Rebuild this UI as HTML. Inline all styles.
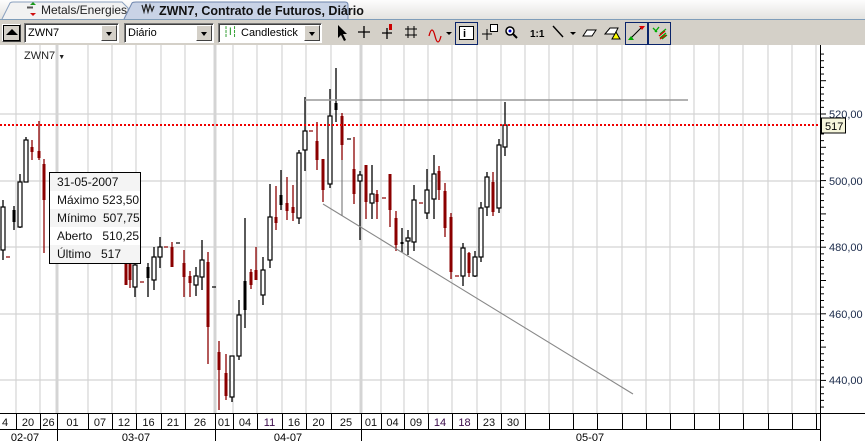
<!DOCTYPE html>
<html><head><meta charset="utf-8"><style>
*{margin:0;padding:0;box-sizing:border-box}
body{width:865px;height:441px;overflow:hidden;background:#fff;font-family:"Liberation Sans",sans-serif;font-size:11px;position:relative}
.tabs{position:absolute;left:0;top:0;width:865px;height:20px;background:linear-gradient(#fdfdfd,#e4e3e0);border-bottom:1px solid #7f9db9}
.tb{position:absolute;left:0;top:20px;width:865px;height:25px;background:#d4d0c8}
.combo{position:absolute;top:23px;height:20px;background:#fff;border:1px solid #7a7a7a;border-right-color:#fff;border-bottom-color:#fff;box-shadow:inset 1px 1px 0 #404040;font-size:11px;line-height:18px;padding-left:3px}
.dd{position:absolute;right:1px;top:1px;width:16px;height:16px;background:#d4d0c8;border:1px solid;border-color:#fff #404040 #404040 #fff}
.dd:after{content:"";position:absolute;left:4px;top:6px;border-left:3px solid transparent;border-right:3px solid transparent;border-top:4px solid #000}
.ic{position:absolute;top:22px;font-size:13px}
.box{position:absolute;top:22px;height:22px;border:1px solid #0a246a}
</style></head><body>
<div class="tabs">
 <svg width="865" height="20" style="position:absolute;left:0;top:0">
  <path d="M2 19 L10 3 Q11 2 13 2 L122 2 L128 8 L128 19" fill="#f2f2f2" stroke="#8aa0bf"/>
  <path d="M124 19 L132 3 Q133 2 136 2 L345 2 Q348 2 348 5 L348 19" fill="#c9d3e6" stroke="#6f86ae"/>
  <path d="M30 5 l3 -3 3 3z" fill="#1a9a1a"/><path d="M27 7 h6 M27 8 h6" stroke="#555"/><path d="M30 13 l3 3 3 -3z" fill="#d01010"/>
  <path d="M142 5 l2 7 2 -8 2 8 2 -7 2 6 2 -5" fill="none" stroke="#222" stroke-width="1.2"/>
  <text x="41" y="14" font-size="12" fill="#222" font-family="Liberation Sans">Metals/Energies</text>
  <text x="159" y="15" font-size="12.5" font-weight="bold" fill="#111" font-family="Liberation Sans">ZWN7, Contrato de Futuros, Diário</text>
 </svg>
</div>
<div class="tb"></div>
<div style="position:absolute;left:2px;top:24px;width:19px;height:18px;border:1px solid;border-color:#fff #404040 #404040 #fff;box-shadow:inset 0 0 0 1px #000"></div>
<div style="position:absolute;left:6px;top:29px;border-left:6px solid transparent;border-right:6px solid transparent;border-bottom:6px solid #000"></div>
<div class="combo" style="left:24px;width:95px">ZWN7<div class="dd"></div></div>
<div class="combo" style="left:124px;width:90px">Diário<div class="dd"></div></div>
<div class="combo" style="left:218px;width:104px;padding-left:22px"><span style="position:absolute;left:4px;top:0;color:#080;font-size:10px">┆ǀ┆</span>Candlestick<div class="dd"></div></div>
<svg width="865" height="25" style="position:absolute;left:0;top:20px">
 <path d="M338 5 v13 l3 -3 3 6 2 -1 -3 -6 4 0z" fill="#000"/>
 <path d="M358 12 h12 M364 6 v12" stroke="#000" stroke-width="1.3"/>
 <path d="M382 13 h10 M387 8 v11" stroke="#000" stroke-width="1.3"/><rect x="389" y="4" width="3" height="6" fill="#c00"/>
 <path d="M405 9 h12 M405 15 h12 M408 6 v12 M414 6 v12" stroke="#000"/>
 <path d="M429 16 q3 -12 6 0 q3 12 6 0" fill="none" stroke="#c00" stroke-width="1.3"/>
 <path d="M446 12 l3 3 3 -3z" fill="#000"/>
 <rect x="455.5" y="2.5" width="22" height="22" fill="#d4d0c8" stroke="#0a246a"/>
 <rect x="459.5" y="6.5" width="14" height="13" fill="#fff" stroke="#000"/><text x="463" y="17" font-size="11" font-weight="bold" font-family="Liberation Sans">i</text>
 <path d="M482 14 h10 M487 9 v11" stroke="#000"/><rect x="490.5" y="4.5" width="7" height="7" fill="#fff" stroke="#000"/>
 <circle cx="510" cy="11" r="4" fill="#fff" stroke="#000" stroke-width="1.5"/><circle cx="510" cy="11" r="1.5" fill="#00c"/><path d="M513 14 l4 4" stroke="#000" stroke-width="2"/>
 <text x="530" y="17" font-size="10" font-weight="bold" font-family="Liberation Sans">1:1</text>
 <path d="M553 6 l10 11" stroke="#000" stroke-width="1.4"/><path d="M570 12 l3 3 3 -3z" fill="#000"/>
 <path d="M583 16 l4 -6 h9 l-4 6z" fill="#fff" stroke="#000"/>
 <path d="M605 14 l5 -6 h8 l-3 6z" fill="#fff" stroke="#000"/><path d="M612 19 l4 -7 4 7z" fill="#ff0" stroke="#000"/>
 <rect x="625.5" y="2.5" width="22" height="22" fill="#d4d0c8" stroke="#0a246a"/>
 <path d="M630 19 l12 -12" stroke="#000"/><path d="M628 20 l3 -4 3 4z" fill="#0a0"/><path d="M639 6 h6 l-3 4z" fill="#d00"/>
 <rect x="648.5" y="2.5" width="22" height="22" fill="#d4d0c8" stroke="#0a246a"/>
 <path d="M653 8 l4 4 M655 12 l4 -5 M660 14 l6 -5 M660 18 l6 -5 M662 19 l5 -4" stroke="#0a0" stroke-width="1.3"/><path d="M659 16 l6 -5 M660 19 l6 -4" stroke="#d00" stroke-width="1.3"/>
</svg>
<svg id="ch" width="865" height="396" style="position:absolute;left:0;top:45px" font-family="Liberation Sans"></svg>
<div style="position:absolute;left:24px;top:50px;font-size:11px;color:#222">ZWN7 <span style="font-size:7px">▼</span></div>
<div style="position:absolute;left:49px;top:172px;width:92px;height:92px;border:1px solid #000;background:#f4f4f4;font-size:12px;color:#111">
 <div style="height:18px;line-height:18px;padding-left:7px">31-05-2007</div>
 <div style="height:18px;line-height:18px;padding-left:7px;background:#fff">Máximo 523,50</div>
 <div style="height:18px;line-height:18px;padding-left:7px">Mínimo&nbsp; 507,75</div>
 <div style="height:18px;line-height:18px;padding-left:7px;background:#fff">Aberto&nbsp;&nbsp; 510,25</div>
 <div style="height:18px;line-height:18px;padding-left:7px">Último&nbsp;&nbsp; 517</div>
</div>
<script>
var s='',O=45;
function Y(y){return y-O}
var gx=[16,40,57,88,112,136,161,185,215,233,257,282,306,331,361,381,404,428,452,477,501,525,549,573,597,622,646,670,694,719,743,768,792,816];
gx.forEach(function(x){var t=(x==57||x==215||x==361);s+='<line x1="'+x+'" y1="0" x2="'+x+'" y2="368" stroke="#d4d4d4" stroke-width="'+(t?3:1.2)+'"/>';});
[114,181,247,314,380].forEach(function(y){s+='<line x1="0" y1="'+Y(y)+'" x2="820" y2="'+Y(y)+'" stroke="#d4d4d4" stroke-width="1.2"/>';});
var C=[[3,200,260,207,250,'h'],[8,257,257,257,257,'r'],[14,206,230,210,222,'k'],[20,174,228,182,227,'h'],[26,137,182,140,182,'h'],[32,140,160,147,152,'r'],[39,121,160,151,158,'r'],[44,159,253,164,200,'r'],
[126,263,285,263,285,'r'],[130,263,288,263,280,'r'],[135,263,297,265,287,'h'],[142,282,282,282,282,'r'],[148,263,297,267,278,'k'],[154,247,290,257,280,'h'],[160,237,268,247,257,'h'],[166,247,247,247,247,'r'],[172,242,267,247,267,'r'],[178,243,243,243,243,'k'],[184,250,297,263,277,'r'],[190,271,297,276,283,'r'],[196,267,296,276,285,'h'],[202,240,290,260,277,'h'],[208,252,364,262,327,'r'],[214,287,287,287,287,'k'],[219,341,410,352,370,'r'],[226,354,400,373,396,'r'],[232,356,402,356,397,'h'],[239,300,360,315,356,'h'],[245,218,328,281,310,'k'],[251,269,289,272,285,'r'],[256,247,277,270,280,'r'],[263,257,305,270,295,'h'],[270,184,268,217,260,'h'],[276,186,230,217,223,'r'],[281,170,210,195,205,'k'],[287,177,220,203,211,'r'],
[293,185,221,207,213,'r'],[299,150,224,153,218,'h'],[305,97,171,131,150,'h'],[311,131,131,131,131,'r'],[317,122,170,141,160,'r'],[323,159,202,159,190,'r'],[330,89,188,116,184,'h'],[336,68,122,103,110,'k'],[342,113,160,116,145,'r'],[349,139,139,139,139,'k'],[354,137,204,169,194,'r'],[360,171,240,175,181,'h'],[366,165,219,165,202,'r'],[372,165,219,194,203,'h'],[377,190,219,194,202,'r'],[384,198,198,198,198,'r'],[390,174,227,174,210,'r'],[396,211,251,218,245,'r'],[402,228,252,242,244,'k'],[408,230,255,238,241,'h'],[414,185,251,200,242,'h'],[421,203,203,203,203,'r'],[427,169,219,190,213,'h'],[434,155,219,174,199,'h'],[439,166,200,171,190,'r'],[445,183,237,191,228,'r'],[451,213,279,217,272,'r'],[457,276,276,276,276,'r'],[463,243,286,248,276,'h'],[469,252,277,253,273,'r'],[475,251,277,257,276,'h'],[481,202,262,208,257,'h'],[487,172,216,177,207,'h'],[493,172,216,182,212,'r'],[499,139,213,145,208,'h'],[505,102,156,125,147,'h']];
C.forEach(function(c){var x=c[0],col=c[5]=='r'?'#8b0000':'#000';
 if(c[3]==c[4]){s+='<line x1="'+(x-2)+'" y1="'+Y(c[3])+'" x2="'+(x+2)+'" y2="'+Y(c[3])+'" stroke="'+col+'" stroke-width="1.2"/>';return;}
 s+='<line x1="'+x+'" y1="'+Y(c[1])+'" x2="'+x+'" y2="'+Y(c[2])+'" stroke="'+col+'" stroke-width="1.3"/>';
 if(c[5]=='h')s+='<rect x="'+(x-2)+'" y="'+Y(c[3])+'" width="4" height="'+(c[4]-c[3])+'" fill="#fff" stroke="#000" stroke-width="1.2"/>';
 else s+='<rect x="'+(x-1.5)+'" y="'+Y(c[3])+'" width="3" height="'+(c[4]-c[3])+'" fill="'+col+'"/>';});
s+='<line x1="305" y1="'+Y(100)+'" x2="688" y2="'+Y(100)+'" stroke="#999" stroke-width="1.5"/>';
s+='<line x1="323" y1="'+Y(204)+'" x2="633" y2="'+Y(394)+'" stroke="#888" stroke-width="1.1"/>';
s+='<line x1="342" y1="'+Y(160)+'" x2="342" y2="'+Y(216)+'" stroke="#777" stroke-width="1.1"/>';
s+='<line x1="0" y1="'+Y(125)+'" x2="820" y2="'+Y(125)+'" stroke="#e00" stroke-width="2" stroke-dasharray="2,2"/>';
s+='<line x1="820.5" y1="0" x2="820.5" y2="396" stroke="#000"/>';
for(var p=430;p<=538;p+=2){var y=Y(114+(520-p)*3.33);if(y<2||y>366)continue;s+='<line x1="820" y1="'+y+'" x2="'+(p%10==0?826:824)+'" y2="'+y+'" stroke="#000"/>';}
[[520,114],[500,181],[480,247],[460,314],[440,380]].forEach(function(a){s+='<text x="829" y="'+(Y(a[1])+4)+'" font-size="11" fill="#1a2a4a">'+a[0]+',00</text>';});
s+='<rect x="821.5" y="'+Y(118)+'" width="24" height="15" fill="#f6f6dc" stroke="#000"/><text x="825" y="'+Y(130)+'" font-size="11">517</text>';
s+='<line x1="0" y1="'+Y(413.5)+'" x2="865" y2="'+Y(413.5)+'" stroke="#000"/><line x1="0" y1="'+Y(429.5)+'" x2="820" y2="'+Y(429.5)+'" stroke="#000"/>';
var b=[0].concat(gx).concat([820]);
var L=['4','20','26','01','07','12','16','21','26','01','04','11','16','20','25','01','04','09','14','18','23','30'];
for(var i=1;i<b.length-1;i++)s+='<line x1="'+(b[i]+.5)+'" y1="'+Y(414)+'" x2="'+(b[i]+.5)+'" y2="'+Y(429)+'" stroke="#000"/>';
L.forEach(function(t,i){var x1=b[i],x2=b[i+1];s+='<text x="'+(t=='4'?2:(x1+x2)/2)+'" y="'+Y(426)+'" font-size="11" text-anchor="'+(t=='4'?'start':'middle')+'" fill="'+((t=='14'||t=='18'||t=='11')?'#3a0a4a':'#111')+'">'+t+'</text>';});
[[57,''],[215,''],[361,'']].forEach(function(a){s+='<line x1="'+(a[0]+.5)+'" y1="'+Y(430)+'" x2="'+(a[0]+.5)+'" y2="396" stroke="#000"/>';});
[['02-07',25],['03-07',136],['04-07',288],['05-07',590]].forEach(function(a){s+='<text x="'+a[1]+'" y="'+Y(441)+'" font-size="11" text-anchor="middle">'+a[0]+'</text>';});
document.getElementById('ch').innerHTML=s;
</script>
</body></html>
